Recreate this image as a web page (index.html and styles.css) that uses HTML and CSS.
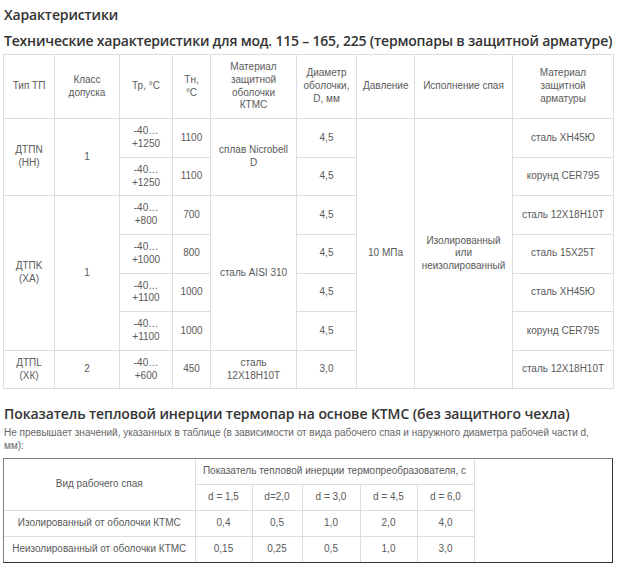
FILE: index.html
```html
<!DOCTYPE html>
<html lang="ru">
<head>
<meta charset="utf-8">
<title>Характеристики</title>
<link rel="stylesheet" href="styles.css">
</head>
<body>
<div class="page">
  <h1 class="title">Характеристики</h1>
  <h2 class="subtitle">Технические характеристики для мод. 115 – 165, 225 (термопары в защитной арматуре)</h2>
  <table class="spec">
    <colgroup>
      <col class="c1"><col class="c2"><col class="c3"><col class="c4"><col class="c5"><col class="c6"><col class="c7"><col class="c8"><col class="c9">
    </colgroup>
    <tr class="head">
      <td>Тип ТП</td>
      <td>Класс допуска</td>
      <td>Тр, °С</td>
      <td>Тн, °С</td>
      <td>Материал защитной оболочки КТМС</td>
      <td>Диаметр оболочки, D, мм</td>
      <td>Давление</td>
      <td>Исполнение спая</td>
      <td>Материал защитной арматуры</td>
    </tr>
    <tr>
      <td rowspan="2">ДТПN (НН)</td>
      <td rowspan="2">1</td>
      <td>-40… +1250</td>
      <td>1100</td>
      <td rowspan="2">сплав Nicrobell D</td>
      <td>4,5</td>
      <td rowspan="7">10 МПа</td>
      <td rowspan="7">Изолированный или неизолированный</td>
      <td>сталь ХН45Ю</td>
    </tr>
    <tr>
      <td>-40… +1250</td>
      <td>1100</td>
      <td>4,5</td>
      <td>корунд CER795</td>
    </tr>
    <tr>
      <td rowspan="4">ДТПK (ХА)</td>
      <td rowspan="4">1</td>
      <td>-40… +800</td>
      <td>700</td>
      <td rowspan="4">сталь AISI 310</td>
      <td>4,5</td>
      <td>сталь 12Х18Н10Т</td>
    </tr>
    <tr>
      <td>-40… +1000</td>
      <td>800</td>
      <td>4,5</td>
      <td>сталь 15Х25Т</td>
    </tr>
    <tr>
      <td>-40… +1100</td>
      <td>1000</td>
      <td>4,5</td>
      <td>сталь ХН45Ю</td>
    </tr>
    <tr>
      <td>-40… +1100</td>
      <td>1000</td>
      <td>4,5</td>
      <td>корунд CER795</td>
    </tr>
    <tr>
      <td>ДТПL (ХК)</td>
      <td>2</td>
      <td>-40… +600</td>
      <td>450</td>
      <td>сталь 12Х18Н10Т</td>
      <td>3,0</td>
      <td>сталь 12Х18Н10Т</td>
    </tr>
  </table>

  <h2 class="subtitle second">Показатель тепловой инерции термопар на основе КТМС (без защитного чехла)</h2>
  <p class="note">Не превышает значений, указанных в таблице (в зависимости от вида рабочего спая и наружного диаметра рабочей части d, мм):</p>
  <div class="frame">
    <table class="inertia">
      <colgroup>
        <col class="k1"><col class="k2"><col class="k3"><col class="k4"><col class="k5"><col class="k6">
      </colgroup>
      <tr class="first">
        <td rowspan="2" class="lead">Вид рабочего спая</td>
        <td colspan="5">Показатель тепловой инерции термопреобразователя, с</td>
      </tr>
      <tr>
        <td>d = 1,5</td>
        <td>d=2,0</td>
        <td>d = 3,0</td>
        <td>d = 4,5</td>
        <td>d = 6,0</td>
      </tr>
      <tr>
        <td class="lead">Изолированный от оболочки КТМС</td>
        <td>0,4</td>
        <td>0,5</td>
        <td>1,0</td>
        <td>2,0</td>
        <td>4,0</td>
      </tr>
      <tr class="last">
        <td class="lead">Неизолированный от оболочки КТМС</td>
        <td>0,15</td>
        <td>0,25</td>
        <td>0,5</td>
        <td>1,0</td>
        <td>3,0</td>
      </tr>
    </table>
  </div>
</div>
</body>
</html>
```

FILE: styles.css
```css
html, body {
  margin: 0;
  padding: 0;
  background: #ffffff;
}

.page {
  width: 610px;
  padding: 5px 9px 0 3px;
  font-family: "Liberation Sans", Arial, sans-serif;
  font-size: 10px;
  color: #5a5a5a;
}

.title {
  margin: 0 0 6px 1px;
  font-family: "Open Sans", "DejaVu Sans", sans-serif;
  font-weight: 600;
  font-size: 14px;
  line-height: 20px;
  letter-spacing: -0.15px;
  color: #333333;
}

.subtitle {
  margin: 0 0 3px 1px;
  font-family: "Open Sans", "DejaVu Sans", sans-serif;
  font-weight: 600;
  font-size: 14px;
  line-height: 20px;
  letter-spacing: -0.2px;
  color: #333333;
  white-space: nowrap;
}

.subtitle.second {
  margin: 15px 0 2px 1px;
  letter-spacing: -0.1px;
}

.spec {
  width: 610px;
  table-layout: fixed;
  border-collapse: collapse;
}

.spec td,
.inertia td {
  border: 1px solid #dddddd;
  padding: 6px 6px;
  line-height: 12.8px;
  text-align: center;
  vertical-align: middle;
}

.c1 { width: 51px; }
.c2 { width: 65px; }
.c3 { width: 53px; }
.c4 { width: 38px; }
.c5 { width: 86px; }
.c6 { width: 60px; }
.c7 { width: 58px; }
.c8 { width: 98px; }
.c9 { width: 101px; }

.note {
  width: 592px;
  margin: 0 0 6px 1px;
  line-height: 13px;
  color: #666666;
}

.frame {
  width: 608px;
  border: 1px solid;
  border-color: #808080 #333333 #333333 #808080;
}

.inertia {
  width: 470px;
  table-layout: fixed;
  border-collapse: collapse;
}

.inertia td {
  padding: 6px 4px;
}

.inertia tr.first td { border-top: none; }
.inertia tr.last td { border-bottom: none; }
.inertia td.lead { border-left: none; }

.k1 { width: 191px; }
.k2 { width: 57px; }
.k3 { width: 50px; }
.k4 { width: 58px; }
.k5 { width: 57px; }
.k6 { width: 57px; }
```
